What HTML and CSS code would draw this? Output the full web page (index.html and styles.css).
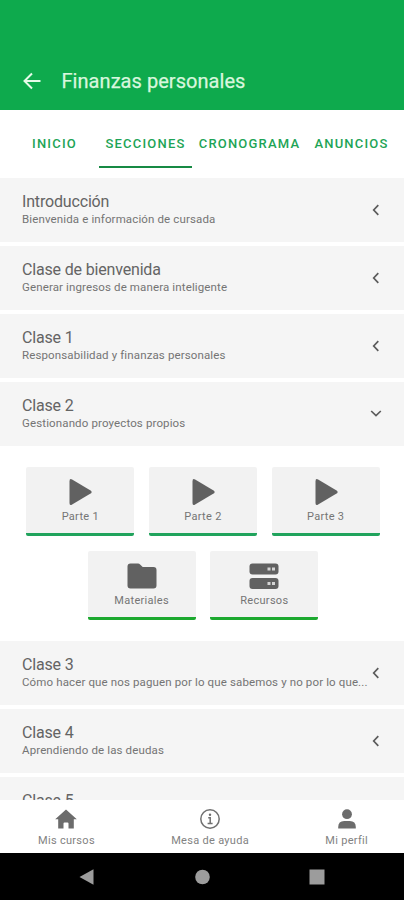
FILE: index.html
```html
<!DOCTYPE html>
<html lang="es">
<head>
<meta charset="utf-8">
<title>Finanzas personales</title>
<link rel="stylesheet" href="styles.css">
</head>
<body>
<div class="app">
  <header class="topbar">
    <svg class="back" viewBox="0 0 18 18"><path d="M17.500 9H2M9 1.500 1.500 9 9 16.500"/></svg>
    <h1>Finanzas personales</h1>
  </header>
  <nav class="tabs">
    <a class="tab">INICIO</a>
    <a class="tab active">SECCIONES</a>
    <a class="tab">CRONOGRAMA</a>
    <a class="tab">ANUNCIOS</a>
  </nav>
  <main class="content">
    <section class="row">
      <div class="text"><h2>Introducción</h2><p>Bienvenida e información de cursada</p></div>
      <svg class="chev" viewBox="0 0 12 12"><path d="M8.300 1.200 3.700 6l4.600 4.800"/></svg>
    </section>
    <section class="row">
      <div class="text"><h2>Clase de bienvenida</h2><p>Generar ingresos de manera inteligente</p></div>
      <svg class="chev" viewBox="0 0 12 12"><path d="M8.300 1.200 3.700 6l4.600 4.800"/></svg>
    </section>
    <section class="row">
      <div class="text"><h2>Clase 1</h2><p>Responsabilidad y finanzas personales</p></div>
      <svg class="chev" viewBox="0 0 12 12"><path d="M8.300 1.200 3.700 6l4.600 4.800"/></svg>
    </section>
    <section class="row">
      <div class="text"><h2>Clase 2</h2><p>Gestionando proyectos propios</p></div>
      <svg class="chev" viewBox="0 0 12 12"><path d="M1.200 3 6 7.500l4.800-4.500"/></svg>
    </section>
    <div class="tiles">
      <div class="tile"><svg viewBox="0 0 30 28"><path d="M4.500 3.500v21.500q0 3 2.600 1.500L25.600 15.600q2-1.600 0-3.200L7.100 1.500Q4.500 0 4.500 3.500Z"/></svg><span>Parte 1</span></div>
      <div class="tile"><svg viewBox="0 0 30 28"><path d="M4.500 3.500v21.500q0 3 2.600 1.500L25.600 15.600q2-1.600 0-3.200L7.100 1.500Q4.500 0 4.500 3.500Z"/></svg><span>Parte 2</span></div>
      <div class="tile"><svg viewBox="0 0 30 28"><path d="M4.500 3.500v21.500q0 3 2.600 1.500L25.600 15.600q2-1.600 0-3.200L7.100 1.500Q4.500 0 4.500 3.500Z"/></svg><span>Parte 3</span></div>
      <div class="tile green"><svg viewBox="0 0 30 28"><path d="M3.500 1.500h7.500q1.300 0 2.100.9l2.600 2.600h10.800q3 0 3 3v15.500q0 3-3 3h-23q-3 0-3-3v-19q0-3 3-3Z"/></svg><span>Materiales</span></div>
      <div class="tile green"><svg viewBox="0 0 30 28"><rect x="0.500" y="1.500" width="29" height="11" rx="3"/><rect x="0.500" y="16" width="29" height="11" rx="3"/><path class="led" d="M18.500 5.500h3v3h-3ZM23 5.500h3v3h-3ZM18.500 20h3v3h-3ZM23 20h3v3h-3Z"/></svg><span>Recursos</span></div>
    </div>
    <section class="row">
      <div class="text"><h2>Clase 3</h2><p>Cómo hacer que nos paguen por lo que sabemos y no por lo que...</p></div>
      <svg class="chev" viewBox="0 0 12 12"><path d="M8.300 1.200 3.700 6l4.600 4.800"/></svg>
    </section>
    <section class="row">
      <div class="text"><h2>Clase 4</h2><p>Aprendiendo de las deudas</p></div>
      <svg class="chev" viewBox="0 0 12 12"><path d="M8.300 1.200 3.700 6l4.600 4.800"/></svg>
    </section>
    <section class="row">
      <div class="text"><h2>Clase 5</h2></div>
    </section>
  </main>
  <nav class="bottom">
    <a class="item"><svg viewBox="0 0 22 20"><path d="M11 .4 21.800 10.200H18.800V19.500H13.500V14.500q0-1-1-1h-3q-1 0-1 1v5H3.200V10.200H.2Z"/></svg><span>Mis cursos</span></a>
    <a class="item"><svg viewBox="0 0 22 20"><circle class="ring" cx="11" cy="10" r="9.200"/><circle cx="11" cy="5.700" r="1.200"/><path class="i" d="M9.200 8.800h2v5.600M8.600 14.600h5"/></svg><span>Mesa de ayuda</span></a>
    <a class="item"><svg viewBox="0 0 22 20"><circle cx="11" cy="5.200" r="4.900"/><path d="M2.200 19.500v-1.500q0-6 6-6h5.600q6 0 6 6v1.500Z"/></svg><span>Mi perfil</span></a>
  </nav>
  <footer class="system">
    <svg viewBox="0 0 16 16"><path d="M14.500 .2v15.600L.5 8Z"/></svg>
    <svg viewBox="0 0 16 16"><circle cx="8.500" cy="8" r="7.300"/></svg>
    <svg viewBox="0 0 16 16"><path d="M.5.500h15v15H.5Z"/></svg>
  </footer>
</div>
</body>
</html>
```
FILE: styles.css
```css
* { box-sizing: border-box; }
body, h1, h2, p { margin: 0; font-weight: 400; }
body { font-family: Roboto, "Liberation Sans", sans-serif; color: #616161; }
svg { display: block; flex: none; }

.app { width: 404px; height: 900px; display: flex; flex-direction: column; overflow: hidden; background: #fff; }

.topbar { flex: none; height: 110.400px; background: #0eaa4d; display: flex; align-items: center; padding: 51px 23px 0 23px; }
.back { width: 18px; height: 18px; fill: none; stroke: #e6fbe9; stroke-width: 2; }
.topbar h1 { margin-left: 20.500px; font-size: 20px; letter-spacing: .05px; line-height: 24px; color: #d8f7de; -webkit-text-stroke: .25px; }

.tabs { flex: none; height: 67.200px; padding: 0 8px 10px 8px; display: grid; grid-template-columns: 91px 93px 115px 89px; }
.tab { display: flex; align-items: center; justify-content: center; padding-top: 12px; font-size: 13px; font-weight: 500; letter-spacing: 1.200px; color: #1da456; border-bottom: 2px solid transparent; white-space: nowrap; }
.tab:first-child { padding-left: 2px; }
.tab.active { border-color: #178a44; }

.content { flex: 1; min-height: 0; overflow: hidden; }
.row { height: 64px; margin-bottom: 4px; padding: 0 22px; background: #f5f5f5; display: flex; align-items: center; justify-content: space-between; }
.text { flex: 1; min-width: 0; height: 64px; padding-top: 14px; white-space: nowrap; }
.text h2 { font-size: 16px; line-height: 19px; letter-spacing: -.17px; color: #646464; }
.text p { font-size: 11.500px; line-height: 17px; letter-spacing: .13px; color: #747474; }
.chev { width: 12px; height: 12px; fill: none; stroke: #5c5c5c; stroke-width: 1.700; }

.tiles { display: flex; flex-wrap: wrap; justify-content: center; gap: 15px 14.700px; padding: 17px 19px 21.800px 21px; }
.tile { width: 108px; height: 69px; border-radius: 2px; border-bottom: 3px solid #20a35c; background: #f2f2f2; display: flex; flex-direction: column; align-items: center; padding-top: 11px; font-size: 11px; line-height: 15px; letter-spacing: .3px; color: #757575; }
.tile.green { border-color: #1ca92f; }
.tile svg { width: 30px; height: 28px; fill: #616161; margin-bottom: 3px; }
.tile .led { fill: #d5d5d5; }

.bottom { flex: none; height: 52.600px; background: #fff; display: flex; justify-content: space-between; padding: 9px 36px 0 38px; }
.item { display: flex; flex-direction: column; align-items: center; font-size: 11px; line-height: 13px; letter-spacing: .3px; color: #828282; }
.item svg { width: 22px; height: 20px; fill: #6c6c6c; margin-bottom: 5px; }
.item .ring, .item .i { fill: none; stroke: #707070; stroke-width: 1.500; }

.system { flex: none; height: 47px; background: #000; display: flex; align-items: center; justify-content: space-between; padding: 0 79px; }
.system svg { width: 16px; height: 16px; fill: #9c9c9c; }
```
